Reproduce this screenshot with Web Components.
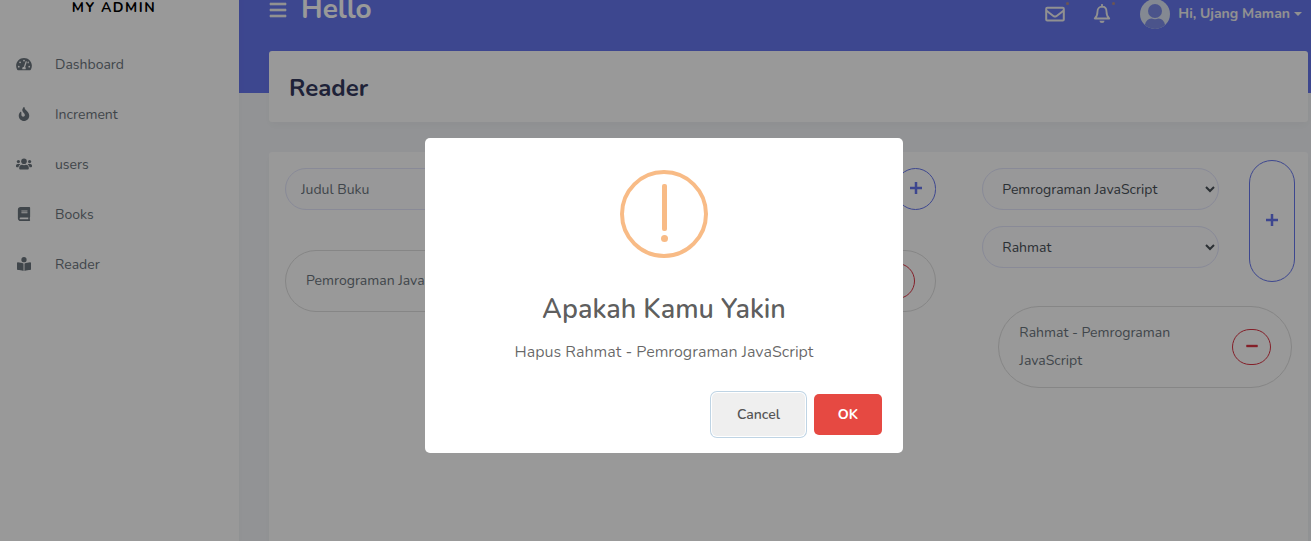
<!DOCTYPE html>
<html lang="id">
<head>
<meta charset="utf-8">
<meta name="viewport" content="width=device-width, initial-scale=1">
<title>My Admin - Reader</title>
<style>
body{margin:0;height:100vh;overflow:hidden;background:#f4f6f9;color:#6c757d;font:14px/28px Nunito,"Open Sans",sans-serif}
</style>
</head>
<body>
<admin-app></admin-app>
<confirm-dialog heading="Apakah Kamu Yakin">Hapus Rahmat - Pemrograman JavaScript</confirm-dialog>
<script>
const define = (name, html, setup) => {
  const t = document.createElement('template');
  t.innerHTML = html;
  customElements.define(name, class extends HTMLElement {
    constructor() {
      super();
      this.attachShadow({mode: 'open'}).append(t.content.cloneNode(true));
    }
    connectedCallback() { if (setup) setup(this, this.shadowRoot); }
  });
};

const icons = {
  gauge: ['0 0 576 512', '<path fill-rule="evenodd" d="M288 32C129 32 0 161 0 320c0 53 14 102 39 145 6 10 16 15 27 15h444c11 0 21-5 27-15 25-43 39-92 39-145C576 161 447 32 288 32zm0 64a32 32 0 1 1 0 64 32 32 0 0 1 0-64zM96 384a32 32 0 1 1 0-64 32 32 0 0 1 0 64zm48-160a32 32 0 1 1 0-64 32 32 0 0 1 0 64zm247-40-61 184c14 12 22 29 22 48 0 12-3 22-8 32H232c-5-10-8-20-8-32 0-34 27-62 60-64l61-183c10-31 56-16 46 15zm20 37 18-54a32 32 0 1 1-18 54zm69 163a32 32 0 1 1 0-64 32 32 0 0 1 0 64z"/>'],
  fire: ['0 0 384 512', '<path fill-rule="evenodd" d="M216 24C216 0 186-9 173 12 48 191 224 200 224 288c0 36-29 64-64 64-36 0-64-30-64-65v-86c0-21-26-32-41-17C28 213 0 261 0 320c0 106 86 192 192 192s192-86 192-192c0-170-168-193-168-296z"/>'],
  users: ['0 0 640 512', '<circle cx="96" cy="160" r="64"/><circle cx="544" cy="160" r="64"/><circle cx="320" cy="144" r="112"/><path d="M64 256c-35 0-64 29-64 64v32c0 18 14 32 32 32h66c6-48 35-89 75-110-12-11-28-18-45-18zm512 0h-64c-18 0-34 7-45 18 40 22 69 62 75 110h66c18 0 32-14 32-32v-32c0-35-29-64-64-64zM397 288c-48 22-106 22-154 0-64 0-115 52-115 115v29c0 27 21 48 48 48h288c27 0 48-21 48-48v-29c0-63-51-115-115-115z"/>'],
  book: ['0 0 448 512', '<path fill-rule="evenodd" d="M448 360V24c0-13-11-24-24-24H96C43 0 0 43 0 96v320c0 53 43 96 96 96h328c13 0 24-11 24-24v-16c0-7-4-14-9-18-4-15-4-59 0-74 5-5 9-12 9-20zM128 134c0-3 3-6 6-6h212c3 0 6 3 6 6v20c0 3-3 6-6 6H134c-3 0-6-3-6-6zm0 64c0-3 3-6 6-6h212c3 0 6 3 6 6v20c0 3-3 6-6 6H134c-3 0-6-3-6-6zm253 250H96a32 32 0 0 1 0-64h285c-2 17-2 47 0 64z"/>'],
  reader: ['0 0 512 512', '<circle cx="256" cy="96" r="96"/><path d="M233 241C186 215 100 195 32 192c-18-1-32 13-32 30v226c0 16 13 29 30 30 49 3 143 13 208 34V251c0-4-2-8-5-10zm247-49c-68 3-154 23-201 49-3 2-5 6-5 10v261c65-21 159-31 208-34 17-1 30-14 30-30V222c0-17-14-31-32-30z"/>'],
  bars: ['0 0 18 16', '<path d="M1 1h16v2H1zM1 7h16v2H1zM1 13h16v2H1z" stroke="currentColor" stroke-width=".6"/>'],
  mail: ['0 0 20 16', '<g fill="none" stroke="currentColor" stroke-width="2" stroke-linejoin="round"><rect x="1.2" y="1.8" width="17.6" height="12.8" rx="1"/><path d="m1.500 4.800 7.200 5.400q1.300.8 2.600 0l7.200-5.400"/></g>'],
  bell: ['0 0 18 20', '<path d="M9 .8v2M1.800 14.500h14.400c-2.200-2-2.700-3.700-2.700-7 0-2.900-1.800-4.800-4.500-4.800S4.500 4.600 4.500 7.500c0 3.300-.5 5-2.700 7z" fill="none" stroke="currentColor" stroke-width="1.800" stroke-linejoin="round" stroke-linecap="round"/><path d="M6.500 16.700h5a2.500 2.300 0 0 1-5 0z"/>'],
  plus: ['0 0 12 12', '<path d="M5 0h2v5h5v2H7v5H5V7H0V5h5z" stroke="currentColor" stroke-width=".5"/>'],
  minus: ['0 0 12 12', '<path d="M.5 5h11v2H.5z" stroke="currentColor" stroke-width=".4"/>']
};

define('ui-icon', '<style>:host{display:inline-flex}svg{width:100%;height:100%;fill:currentColor}</style><svg aria-hidden="true"></svg>', (el, r) => {
  const [box, body] = icons[el.getAttribute('name')];
  const svg = r.querySelector('svg');
  svg.setAttribute('viewBox', box);
  svg.innerHTML = body;
});

define('menu-item', `<style>
:host{display:block}
a{display:flex;align-items:center;height:50px;padding-left:16px;color:#6c757d;text-decoration:none}
.icon{display:flex;width:16px;margin-right:23px}
ui-icon{width:16px;height:14px}
.label{padding-top:2px}
</style><a href="#"><span class="icon"></span><span class="label"><slot></slot></span></a>`, (el, r) => {
  r.querySelector('.icon').innerHTML = `<ui-icon name="${el.getAttribute('icon')}"></ui-icon>`;
});

define('side-bar', `<style>
:host{display:block;background:#fff;box-shadow:0 4px 8px rgba(0,0,0,.03);position:relative}
.brand{display:block;height:61px;line-height:60px;padding-right:11px;text-align:center;font-size:14px;font-weight:700;letter-spacing:1.5px;color:#000;text-decoration:none}
</style><a class="brand" href="#">MY ADMIN</a><nav>
<menu-item icon="gauge">Dashboard</menu-item><menu-item icon="fire">Increment</menu-item><menu-item icon="users">users</menu-item><menu-item icon="book">Books</menu-item><menu-item icon="reader">Reader</menu-item></nav>`);

define('top-bar', `<style>
:host{display:flex;align-items:center;height:72px;padding-right:6px;color:#f2f2f2}
button,a{display:flex;align-items:center;border:0;padding:0;background:none;color:inherit;font:inherit;text-decoration:none}
h1{margin:0 auto 10px 14px;font-size:28px;line-height:28px;font-weight:700;color:#fff}
.bars{width:18px;height:16px;margin-bottom:8px}
ui-icon{width:100%;height:100%}
.mail{width:20px;height:16px;margin-right:28px}
.bell{width:18px;height:20px;margin-right:29px}
.note{position:relative}
.note::after{content:"";position:absolute;right:-4px;top:-2px;width:3px;height:3px;border-radius:50%;background:#ffa426;opacity:.5}
.mail::after{top:-4px}
.user{gap:8px;font-weight:700;font-size:14px;white-space:nowrap}
.user svg{width:30px;height:30px}
.caret{border:4px solid transparent;border-top-color:currentColor;border-bottom:0;margin-left:-4px}
</style>
<button class="bars" aria-label="Menu"><ui-icon name="bars"></ui-icon></button><h1>Hello</h1>
<button class="note mail" aria-label="Messages"><ui-icon name="mail"></ui-icon></button>
<button class="note bell" aria-label="Notifications"><ui-icon name="bell"></ui-icon></button>
<a class="user" href="#"><svg viewBox="0 0 30 30" aria-hidden="true"><defs><clipPath id="c"><circle cx="15" cy="15" r="15"/></clipPath></defs><g clip-path="url(#c)"><path fill="#dce4f3" d="M0 0h30v30H0z"/><circle cx="15" cy="12" r="7" fill="#7d8de8"/><path fill="#7d8de8" d="M4.500 30c0-7 3-10.500 7-10.500q3.500 1.500 7 0c4 0 7 3.500 7 10.500z"/></g></svg><span>Hi, Ujang Maman</span><span class="caret"></span></a>`);

define('page-card', `<style>
:host{display:block;background:#fff;border-radius:3px;box-shadow:0 4px 8px rgba(0,0,0,.03)}
</style><slot></slot>`);

define('round-button', `<style>
:host{display:flex;flex:none;color:#6777ef}
:host([kind=remove]){color:#dc3545}
button{display:flex;align-items:center;justify-content:center;width:100%;padding:0 0 2px;border:1px solid;border-radius:30px;background:none;color:inherit}
ui-icon{width:12px;height:12px}
</style><button></button>`, (el, r) => {
  const remove = el.getAttribute('kind') === 'remove';
  const button = r.querySelector('button');
  button.setAttribute('aria-label', remove ? 'Hapus' : 'Tambah');
  button.innerHTML = `<ui-icon name="${remove ? 'minus' : 'plus'}"></ui-icon>`;
});

define('list-entry', `<style>
:host{display:flex;align-items:center;justify-content:space-between;gap:40px;box-sizing:border-box;padding:12px 20px;border:1px solid #dfdfdf;border-radius:41px}
round-button{width:39px;height:36px}
</style><span><slot></slot></span><round-button kind="remove"></round-button>`);

define('reader-board', `<style>
:host{display:grid;grid-template-columns:25fr 12fr;gap:46px;padding:8px 13px 0 16px}
input,select{box-sizing:border-box;width:100%;height:42px;border:1px solid #e4e6fc;border-radius:30px;background-color:#fdfdff;color:#495057;font:inherit;padding:0 15px}
input::placeholder{color:#6c757d;opacity:1}
.add{display:flex;gap:46px;padding-top:8px}
.add round-button{width:41px}
.left list-entry{margin-top:40px;height:62px}
.loan{display:flex;gap:30px}
.fields{flex:1;display:grid;gap:16px;align-content:start;padding-top:8px}
.loan round-button{width:46px;height:122px}
.right list-entry{margin:24px 3px 0 16px}
</style>
<section class="left"><div class="add"><input aria-label="Judul Buku" placeholder="Judul Buku"><round-button></round-button></div>
<list-entry>Pemrograman JavaScript</list-entry></section>
<section class="right"><div class="loan"><div class="fields">
<select aria-label="Buku"><option>Pemrograman JavaScript</option></select>
<select aria-label="Pembaca"><option>Rahmat</option></select></div><round-button></round-button></div>
<list-entry>Rahmat - Pemrograman JavaScript</list-entry></section>`);

define('admin-app', `<style>
:host{display:grid;grid-template-columns:239px minmax(0,1fr);margin-top:-22px;min-height:calc(100vh + 22px)}
main{display:flex;flex-direction:column;padding:0 3px 0 30px;background:linear-gradient(#6777ef,#6777ef) 0 0/100% 115px no-repeat}
.title{margin:1px 0 30px;padding:23px 20px 20px}
.body{flex:1;border-radius:3px 3px 0 0}
h2{margin:0;font-size:24px;line-height:28px;font-weight:700;color:#34395e}
</style><side-bar></side-bar><main><top-bar></top-bar>
<page-card class="title"><h2>Reader</h2></page-card>
<page-card class="body"><reader-board></reader-board></page-card></main>`);

define('confirm-dialog', `<style>
:host{position:fixed;inset:0;display:flex;align-items:center;justify-content:center;padding:50px 0 0 17px;background:rgba(0,0,0,.4)}
.box{width:478px;box-sizing:border-box;background:#fff;border-radius:5px;text-align:center;padding:32px 21px 17px}
.icon{display:block;width:88px;height:88px;margin:0 auto}
h3{margin:34px 0 0;font-size:27px;line-height:36px;font-weight:600;color:rgba(0,0,0,.65)}
p{margin:12px 0 0;font-size:16px;line-height:24px;color:rgba(0,0,0,.6)}
.foot{display:flex;align-items:center;justify-content:flex-end;gap:9px;margin-top:29px}
button{border:0;border-radius:5px;font:700 14px/20px Nunito,"Open Sans",sans-serif;height:41px;width:68px;color:#fff;background:#e64942}
.cancel{width:93px;height:43px;font-weight:600;color:#555;background:#efefef;box-shadow:0 0 0 1px #fff,0 0 0 2px rgba(43,114,165,.3)}
</style><div class="box" role="dialog" aria-modal="true" aria-labelledby="t">
<svg class="icon" viewBox="0 0 88 88" aria-hidden="true"><circle cx="44" cy="44" r="42" fill="none" stroke="#f8bb86" stroke-width="4"/><rect x="42" y="14" width="5" height="47" rx="2" fill="#f8bb86"/><circle cx="44.500" cy="68.500" r="3.500" fill="#f8bb86"/></svg>
<h3 id="t"></h3><p><slot></slot></p><div class="foot"><button class="cancel">Cancel</button><button>OK</button></div></div>`,
(el, r) => { r.querySelector('h3').textContent = el.getAttribute('heading'); });
</script>
</body>
</html>
